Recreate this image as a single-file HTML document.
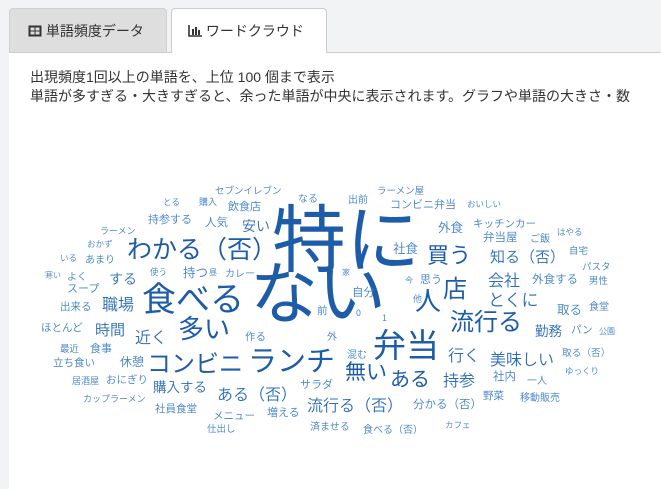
<!DOCTYPE html>
<html><head><meta charset="utf-8"><style>
body{margin:0;width:661px;height:489px;background:#f2f3f5;font-family:"Liberation Sans","Noto Sans CJK JP",sans-serif;overflow:hidden;position:relative}
.tab{position:absolute;top:8px;height:44px;box-sizing:border-box;font-size:14px;line-height:44px;color:#333}
.t1{left:9px;width:158px;background:#dedede;border:1px solid #d0d0d0;border-bottom:none;border-radius:4px 4px 0 0;padding-left:18px}
.t2{left:171px;width:156px;background:#fff;border:1px solid #ccc;border-bottom:none;border-radius:4px 4px 0 0;padding-left:16px;height:45px;z-index:2}
.panel{position:absolute;left:9px;top:52px;right:0;bottom:0;background:#fff;border-top:1px solid #ccc}
.txt{position:absolute;left:30px;top:68px;font-size:14px;line-height:19px;color:#333;white-space:nowrap}
.w{position:absolute;line-height:1;white-space:nowrap;margin-top:-0.1em;font-family:"Noto Sans CJK JP",sans-serif;font-weight:350;color:#3f80c6}
.b{color:#1d5ca8;font-weight:400}.m{color:#2a6cb5}
</style></head><body>
<div class="tab t1"><svg width="14" height="12" viewBox="0 0 14 12" style="vertical-align:-1px"><rect x="0.5" y="0.5" width="13" height="11" fill="#333"/><rect x="2.5" y="2.5" width="4" height="3" fill="#ddd"/><rect x="7.5" y="2.5" width="4" height="3" fill="#ddd"/><rect x="2.5" y="6.5" width="4" height="3" fill="#ddd"/><rect x="7.5" y="6.5" width="4" height="3" fill="#ddd"/></svg> 単語頻度データ</div>
<div class="tab t2"><svg width="14" height="12" viewBox="0 0 14 12" style="vertical-align:-1px"><path d="M1 0v11h13" stroke="#333" stroke-width="1.6" fill="none"/><rect x="4" y="4" width="2" height="6" fill="#333"/><rect x="7" y="2" width="2" height="8" fill="#333"/><rect x="10" y="5" width="2" height="5" fill="#333"/></svg> ワードクラウド</div>
<div class="panel"></div>
<div class="txt">出現頻度1回以上の単語を、上位 100 個まで表示<br>単語が多すぎる・大きすぎると、余った単語が中央に表示されます。グラフや単語の大きさ・数</div>

<span class="w b" style="left:272px;top:205px;font-size:74px">特に</span>
<span class="w b" style="left:250px;top:262px;font-size:68px">ない</span>
<span class="w b" style="left:142px;top:283px;font-size:34px">食べる</span>
<span class="w b" style="left:127px;top:238px;font-size:25px">わかる（否）</span>
<span class="w b" style="left:373px;top:330px;font-size:33px">弁当</span>
<span class="w b" style="left:248px;top:348px;font-size:29px">ランチ</span>
<span class="w b" style="left:147px;top:352px;font-size:24px">コンビニ</span>
<span class="w b" style="left:450px;top:310px;font-size:24px">流行る</span>
<span class="w b" style="left:178px;top:318px;font-size:26px">多い</span>
<span class="w b" style="left:443px;top:277px;font-size:24px">店</span>
<span class="w b" style="left:415px;top:290px;font-size:26px">人</span>
<span class="w b" style="left:427px;top:245px;font-size:22px">買う</span>
<span class="w b" style="left:345px;top:363px;font-size:21px">無い</span>
<span class="w b" style="left:390px;top:370px;font-size:20px">ある</span>
<span class="w m" style="left:443px;top:373px;font-size:16px">持参</span>
<span class="w m" style="left:448px;top:348px;font-size:16px">行く</span>
<span class="w m" style="left:490px;top:352px;font-size:16px">美味しい</span>
<span class="w m" style="left:307px;top:398px;font-size:16px">流行る（否）</span>
<span class="w m" style="left:217px;top:387px;font-size:16px">ある（否）</span>
<span class="w m" style="left:488px;top:292px;font-size:17px">とくに</span>
<span class="w m" style="left:488px;top:273px;font-size:16px">会社</span>
<span class="w m" style="left:490px;top:250px;font-size:15px">知る（否）</span>
<span class="w m" style="left:135px;top:330px;font-size:16px">近く</span>
<span class="w m" style="left:102px;top:297px;font-size:16px">職場</span>
<span class="w m" style="left:95px;top:323px;font-size:15px">時間</span>
<span class="w m" style="left:153px;top:381px;font-size:13.5px">購入する</span>
<span class="w m" style="left:109px;top:273px;font-size:14px">する</span>
<span class="w m" style="left:242px;top:220px;font-size:14px">安い</span>
<span class="w m" style="left:535px;top:325px;font-size:13.5px">勤務</span>
<span class="w" style="left:120px;top:357px;font-size:12px">休憩</span>
<span class="w" style="left:438px;top:222px;font-size:12.5px">外食</span>
<span class="w" style="left:557px;top:304px;font-size:12.5px">取る</span>
<span class="w" style="left:393px;top:243px;font-size:12.5px">社食</span>
<span class="w" style="left:183px;top:267px;font-size:12.5px">持つ</span>
<span class="w" style="left:215px;top:187px;font-size:9.5px">セブンイレブン</span>
<span class="w" style="left:163px;top:199px;font-size:8.5px">とる</span>
<span class="w" style="left:199px;top:198px;font-size:9px">購入</span>
<span class="w" style="left:228px;top:202px;font-size:11px">飲食店</span>
<span class="w" style="left:298px;top:194px;font-size:10px">なる</span>
<span class="w" style="left:348px;top:195px;font-size:10px">出前</span>
<span class="w" style="left:377px;top:187px;font-size:9.5px">ラーメン屋</span>
<span class="w" style="left:390px;top:200px;font-size:11px">コンビニ弁当</span>
<span class="w" style="left:467px;top:201px;font-size:8.5px">おいしい</span>
<span class="w" style="left:148px;top:215px;font-size:11px">持参する</span>
<span class="w" style="left:205px;top:218px;font-size:11.5px">人気</span>
<span class="w" style="left:100px;top:227px;font-size:9px">ラーメン</span>
<span class="w" style="left:87px;top:241px;font-size:8.5px">おかず</span>
<span class="w" style="left:60px;top:255px;font-size:8.5px">いる</span>
<span class="w" style="left:85px;top:255px;font-size:10px">あまり</span>
<span class="w" style="left:45px;top:273px;font-size:8px">寒い</span>
<span class="w" style="left:67px;top:272px;font-size:10px">よく</span>
<span class="w" style="left:150px;top:269px;font-size:8.5px">使う</span>
<span class="w" style="left:209px;top:270px;font-size:8px">昼</span>
<span class="w" style="left:225px;top:269px;font-size:10px">カレー</span>
<span class="w" style="left:67px;top:284px;font-size:11px">スープ</span>
<span class="w" style="left:60px;top:303px;font-size:10.5px">出来る</span>
<span class="w" style="left:41px;top:324px;font-size:10.5px">ほとんど</span>
<span class="w" style="left:60px;top:345px;font-size:9.5px">最近</span>
<span class="w" style="left:90px;top:344px;font-size:11px">食事</span>
<span class="w" style="left:53px;top:359px;font-size:10.5px">立ち食い</span>
<span class="w" style="left:72px;top:377px;font-size:9px">居酒屋</span>
<span class="w" style="left:106px;top:376px;font-size:10.5px">おにぎり</span>
<span class="w" style="left:83px;top:395px;font-size:9px">カップラーメン</span>
<span class="w" style="left:155px;top:405px;font-size:10.5px">社員食堂</span>
<span class="w" style="left:300px;top:380px;font-size:11px">サラダ</span>
<span class="w" style="left:213px;top:412px;font-size:10.5px">メニュー</span>
<span class="w" style="left:267px;top:408px;font-size:11px">増える</span>
<span class="w" style="left:207px;top:425px;font-size:9.5px">仕出し</span>
<span class="w" style="left:310px;top:422px;font-size:10px">済ませる</span>
<span class="w" style="left:245px;top:333px;font-size:10.5px">作る</span>
<span class="w" style="left:317px;top:307px;font-size:10.5px">前</span>
<span class="w" style="left:327px;top:332px;font-size:10px">外</span>
<span class="w" style="left:342px;top:270px;font-size:8px">家</span>
<span class="w" style="left:347px;top:350px;font-size:10px">混む</span>
<span class="w" style="left:352px;top:288px;font-size:11.5px">自分</span>
<span class="w" style="left:356px;top:309px;font-size:9px">0</span>
<span class="w" style="left:382px;top:314px;font-size:9px">1</span>
<span class="w" style="left:405px;top:278px;font-size:8px">今</span>
<span class="w" style="left:420px;top:275px;font-size:11px">思う</span>
<span class="w" style="left:413px;top:295px;font-size:9px">他</span>
<span class="w" style="left:473px;top:220px;font-size:10.5px">キッチンカー</span>
<span class="w" style="left:483px;top:233px;font-size:11.5px">弁当屋</span>
<span class="w" style="left:530px;top:234px;font-size:10px">ご飯</span>
<span class="w" style="left:557px;top:229px;font-size:8.5px">はやる</span>
<span class="w" style="left:569px;top:247px;font-size:9.5px">自宅</span>
<span class="w" style="left:582px;top:263px;font-size:9.5px">パスタ</span>
<span class="w" style="left:532px;top:275px;font-size:11.5px">外食する</span>
<span class="w" style="left:589px;top:277px;font-size:9.5px">男性</span>
<span class="w" style="left:589px;top:302px;font-size:10px">食堂</span>
<span class="w" style="left:571px;top:326px;font-size:10.5px">パン</span>
<span class="w" style="left:599px;top:329px;font-size:8px">公園</span>
<span class="w" style="left:562px;top:349px;font-size:9.7px">取る（否）</span>
<span class="w" style="left:493px;top:372px;font-size:11.5px">社内</span>
<span class="w" style="left:527px;top:376px;font-size:10px">一人</span>
<span class="w" style="left:565px;top:368px;font-size:8.5px">ゆっくり</span>
<span class="w" style="left:483px;top:392px;font-size:10.5px">野菜</span>
<span class="w" style="left:520px;top:393px;font-size:10px">移動販売</span>
<span class="w" style="left:413px;top:400px;font-size:11.5px">分かる（否）</span>
<span class="w" style="left:363px;top:425px;font-size:10px">食べる（否）</span>
<span class="w" style="left:445px;top:422px;font-size:8.5px">カフェ</span>
</body></html>
